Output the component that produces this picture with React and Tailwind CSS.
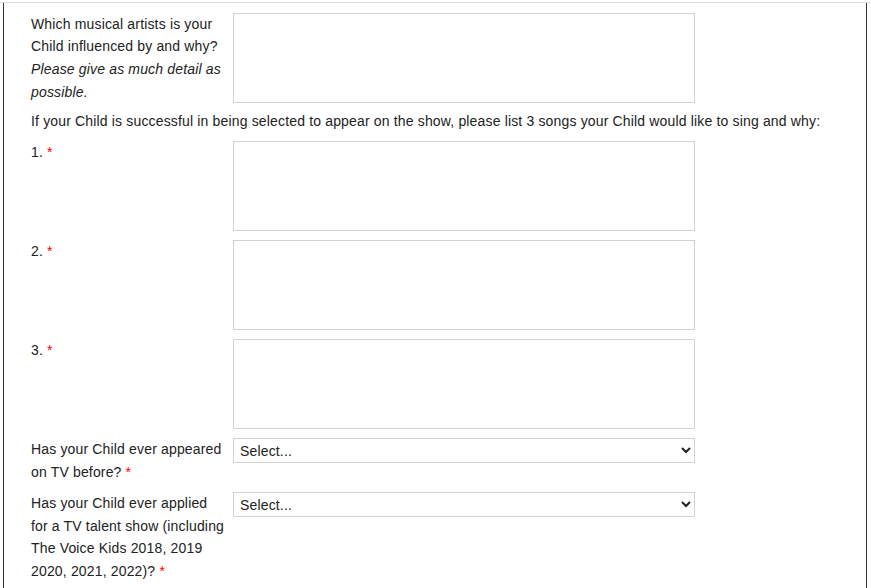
export default function App() {
  const textareaCls = 'block w-[462px] h-[90px] border border-[#d3d3d3] bg-white resize-none'
  const selectCls = 'block w-[462px] h-[25px] border border-[#d3d3d3] bg-white pl-[2px] pt-[1px] text-[14px] tracking-[0.16px] text-[#222]'

  return (
    <div className="min-h-screen bg-white pt-[2px] font-['Liberation_Sans',Arial,sans-serif] text-[14px] leading-[22.75px] tracking-[0.16px] text-[#222]">
      <div className="border-t border-[#dcdcdc]">
        <div className="ml-[3px] w-[864px] min-h-[585px] border-x border-[#333] pl-[27px] pt-[9.5px]">
          {/* Artistas */}
          <div className="flex gap-[8px] mb-[6px]">
            <div className="w-[194px]">
              Which musical artists is your Child influenced by and why? <em>Please give as much detail as possible.</em>
            </div>
            <textarea className={textareaCls + ' mt-[0.5px]'} />
          </div>

          <p className="mb-[8.5px]">
            If your Child is successful in being selected to appear on the show, please list 3 songs your Child would like to sing and why:
          </p>

          {['1.', '2.', '3.'].map(n => (
            <div key={n} className="flex gap-[8px] mb-[9px]">
              <div className="w-[194px]">
                {n} <span className="text-[#f00]">*</span>
              </div>
              <textarea className={textareaCls} />
            </div>
          ))}

          {/* Preguntas TV */}
          <div className="flex gap-[8px] mb-[8.5px]">
            <div className="w-[194px]">
              Has your Child ever appeared on TV before? <span className="text-[#f00]">*</span>
            </div>
            <select className={selectCls} defaultValue="">
              <option value="">Select...</option>
              <option value="yes">Yes</option>
              <option value="no">No</option>
            </select>
          </div>

          <div className="flex gap-[8px]">
            <div className="w-[194px]">
              Has your Child ever applied for a TV talent show (including The Voice Kids 2018, 2019 2020, 2021, 2022)? <span className="text-[#f00]">*</span>
            </div>
            <select className={selectCls} defaultValue="">
              <option value="">Select...</option>
              <option value="yes">Yes</option>
              <option value="no">No</option>
            </select>
          </div>
        </div>
      </div>
    </div>
  )
}
